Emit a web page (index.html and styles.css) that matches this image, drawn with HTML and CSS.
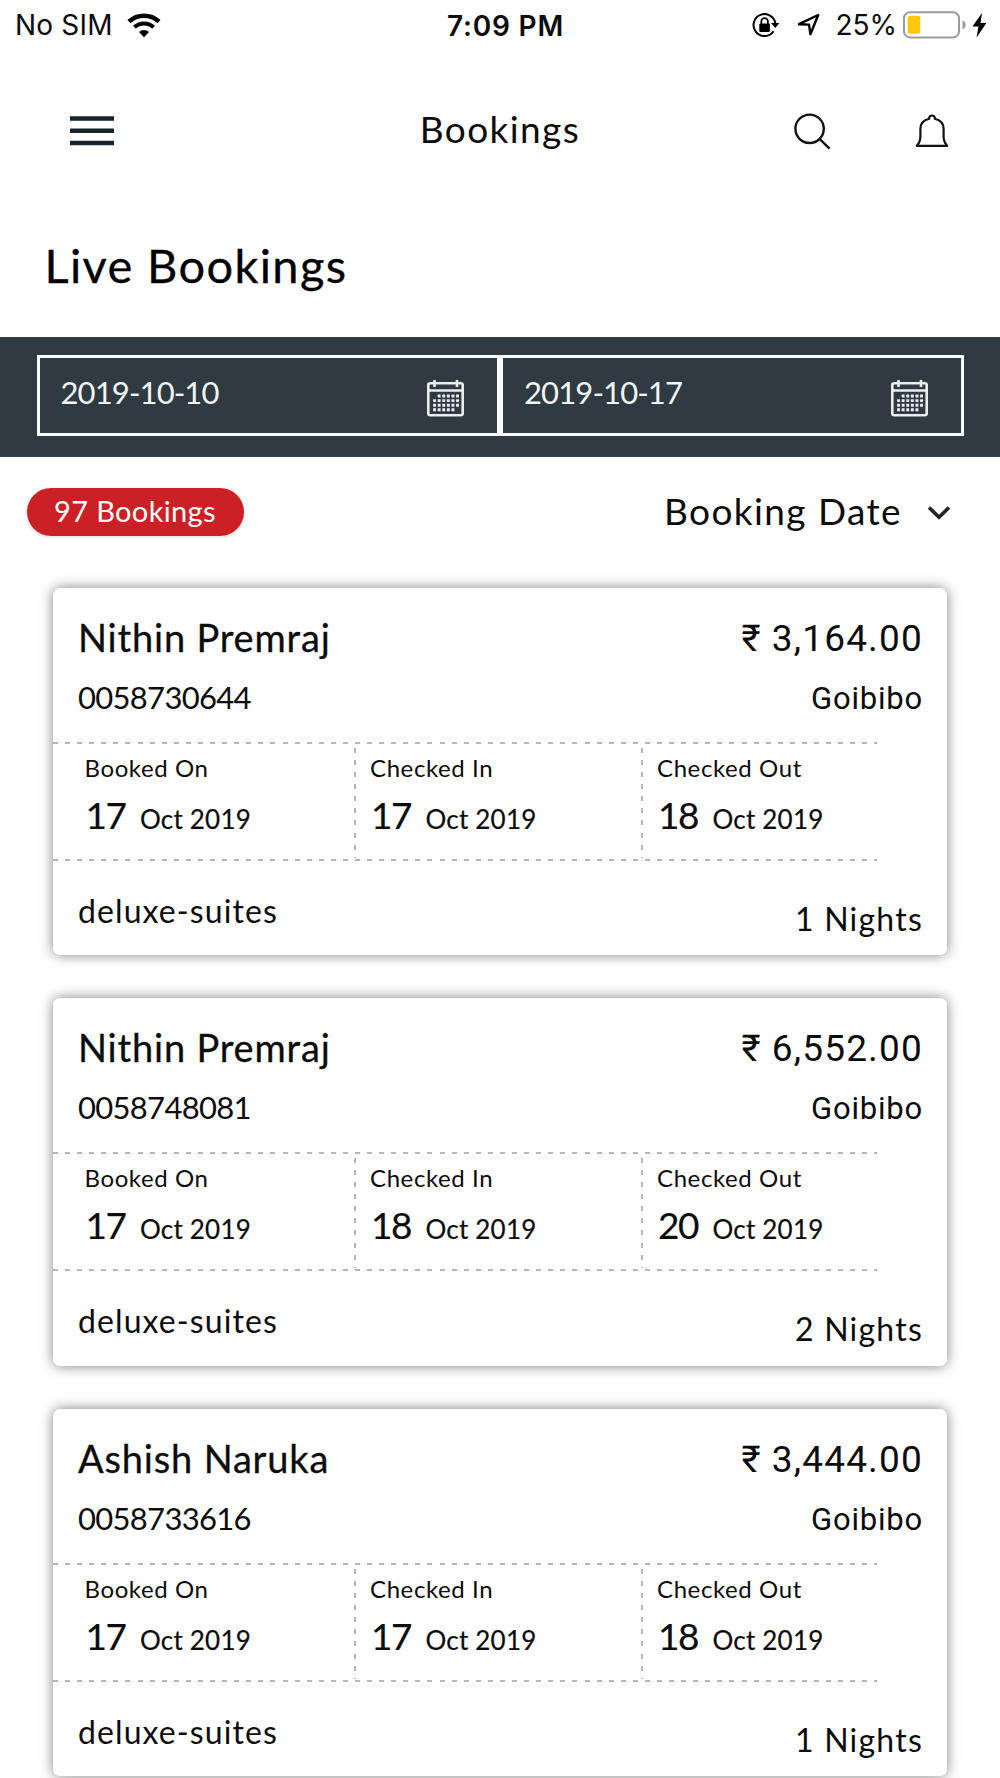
FILE: index.html
```html
<!DOCTYPE html>
<html lang="en">
<head>
<meta charset="utf-8">
<title>Bookings</title>
<link rel="stylesheet" href="styles.css">
</head>
<body>
<div class="status">
  <div class="status-left"><span class="carrier">No SIM</span>
    <svg class="wifi" width="34" height="25" viewBox="0 0 34 25"><g fill="none" stroke="#000"><path d="M2 8.6a22 22 0 0 1 30 0" stroke-width="4.4"/><path d="M7.4 14.3a14 14 0 0 1 19.2 0" stroke-width="4.2"/></g><path d="M17 24.3l-5-5.2a7.2 7.2 0 0 1 10 0z"/></svg>
  </div>
  <div class="clock">7:09 PM</div>
  <div class="status-right">
    <svg class="lock" width="28" height="26" viewBox="0 0 28 26"><path d="M21.6 19.3a11 11 0 1 1 1.9-7" fill="none" stroke="#000" stroke-width="2"/><path d="M19 11h8.4l-4.2 5z"/><rect x="7.3" y="11.5" width="10.6" height="8.5" rx="1"/><path d="M9.3 12V9.4a3.3 3.3 0 0 1 6.6 0V12" fill="none" stroke="#000" stroke-width="1.7"/></svg>
    <svg class="nav-arrow" width="24" height="24" viewBox="0 0 24 24"><path d="M2 11.2L21.2 2 13.4 21.2 12 11.6z" fill="none" stroke="#000" stroke-width="2.4" stroke-linejoin="round"/></svg>
    <span class="percent">25%</span>
    <svg class="battery" width="64" height="28" viewBox="0 0 64 28"><rect x="1" y="1.2" width="55" height="25.2" rx="6" fill="#fff" stroke="#9d9a9f" stroke-width="2"/><rect x="4.6" y="4.8" width="12.6" height="18" rx="2.5" fill="#fdc70c"/><path d="M59.5 9.3c4.2 1.5 4.2 7.5 0 9z" fill="#9d9a9f"/></svg>
    <svg class="bolt" width="15" height="25" viewBox="0 0 15 25"><path d="M10 0L.4 13.6h6L4.6 24.6 14.4 10H8.5z"/></svg>
  </div>
</div>

<header class="header">
  <svg class="menu" width="44" height="30" viewBox="0 0 44 30"><path d="M0 2.5h44M0 14.8h44M0 27h44" stroke="#18242b" stroke-width="4.6"/></svg>
  <h1 class="header-title">Bookings</h1>
  <div class="actions">
    <svg width="37" height="37" viewBox="0 0 37 37" fill="none" stroke="#111" stroke-width="2.4"><circle cx="15.6" cy="15.8" r="14.2"/><path d="M25.6 26l10 9.6"/></svg>
    <svg width="34" height="34" viewBox="0 0 34 34" fill="none" stroke="#111" stroke-width="2.2" stroke-linejoin="round"><path d="M14.2 4.8C13.6.4 20.4.4 19.8 4.8C25 6 28.6 9.8 28.6 15v7.4c0 4.4 1 6.6 3.6 9.4H1.8c2.6-2.8 3.6-5 3.6-9.4V15C5.4 9.8 9 6 14.2 4.8z"/></svg>
  </div>
</header>

<h2 class="page-title">Live Bookings</h2>

<div class="range">
  <div class="field"><span class="field-date">2019-10-10</span><svg class="cal" width="37" height="37" viewBox="0 0 37 37"><use href="#cal"/></svg></div>
  <div class="field"><span class="field-date">2019-10-17</span><svg class="cal" width="37" height="37" viewBox="0 0 37 37"><use href="#cal"/></svg></div>
</div>

<div class="summary">
  <span class="pill">97 Bookings</span>
  <div class="sort"><span>Booking Date</span><svg width="24" height="16" viewBox="0 0 24 16"><path d="M2 2.5l10 9.7 10-9.7" fill="none" stroke="#222" stroke-width="3.6"/></svg></div>
</div>

<main class="list">
  <article class="card">
    <div class="row"><span class="name">Nithin Premraj</span><span class="price"><span class="rupee">₹</span>3,164.00</span></div>
    <div class="row row-id"><span class="ref">0058730644</span><span class="source">Goibibo</span></div>
    <div class="dates">
      <div class="cell"><div class="label">Booked On</div><div class="date"><span class="day">17</span>Oct 2019</div></div>
      <div class="cell"><div class="label">Checked In</div><div class="date"><span class="day">17</span>Oct 2019</div></div>
      <div class="cell"><div class="label">Checked Out</div><div class="date"><span class="day">18</span>Oct 2019</div></div>
    </div>
    <div class="foot"><span class="room">deluxe-suites</span><span class="nights">1 Nights</span></div>
  </article>
  <article class="card">
    <div class="row"><span class="name">Nithin Premraj</span><span class="price"><span class="rupee">₹</span>6,552.00</span></div>
    <div class="row row-id"><span class="ref">0058748081</span><span class="source">Goibibo</span></div>
    <div class="dates">
      <div class="cell"><div class="label">Booked On</div><div class="date"><span class="day">17</span>Oct 2019</div></div>
      <div class="cell"><div class="label">Checked In</div><div class="date"><span class="day">18</span>Oct 2019</div></div>
      <div class="cell"><div class="label">Checked Out</div><div class="date"><span class="day">20</span>Oct 2019</div></div>
    </div>
    <div class="foot"><span class="room">deluxe-suites</span><span class="nights">2 Nights</span></div>
  </article>
  <article class="card">
    <div class="row"><span class="name">Ashish Naruka</span><span class="price"><span class="rupee">₹</span>3,444.00</span></div>
    <div class="row row-id"><span class="ref">0058733616</span><span class="source">Goibibo</span></div>
    <div class="dates">
      <div class="cell"><div class="label">Booked On</div><div class="date"><span class="day">17</span>Oct 2019</div></div>
      <div class="cell"><div class="label">Checked In</div><div class="date"><span class="day">17</span>Oct 2019</div></div>
      <div class="cell"><div class="label">Checked Out</div><div class="date"><span class="day">18</span>Oct 2019</div></div>
    </div>
    <div class="foot"><span class="room">deluxe-suites</span><span class="nights">1 Nights</span></div>
  </article>
</main>

<svg class="defs" width="0" height="0">
  <symbol id="cal" viewBox="0 0 37 37">
    <g fill="none" stroke="#e9eef0">
      <rect x="1.3" y="3.2" width="34.4" height="32" rx="2" stroke-width="2.6"/>
      <path d="M1 10.5h35" stroke-width="2.4"/>
      <path d="M7.5 0v7M30 0v7" stroke-width="2.6"/>
      <g stroke-width="2.9" stroke-dasharray="2.9 1.7">
        <path d="M10.7 16h21.3"/>
        <path d="M6.1 20.6h26"/>
        <path d="M6.1 25.2h26"/>
        <path d="M6.1 29.8h21.3"/>
      </g>
    </g>
  </symbol>
</svg>
</body>
</html>
```
FILE: styles.css
```css
* { box-sizing: border-box; }

body {
  margin: 0;
  width: 1000px;
  height: 1778px;
  overflow: hidden;
  background: #fff;
  color: #0c0c0c;
  font-family: Lato, "Open Sans", sans-serif;
}

svg { display: block; flex: none; }
.defs { position: absolute; }

/* Status bar */
.status {
  display: grid;
  grid-template-columns: 1fr auto 1fr;
  height: 50px;
  line-height: 52px;
  padding: 0 13px 0 15px;
  font-family: Inter, "Liberation Sans", sans-serif;
  font-size: 28px;
}
.status-left, .status-right { display: flex; align-items: center; height: 50px; }
.status-right { justify-content: flex-end; }
.carrier { letter-spacing: .2px; }
.wifi { margin-left: 14px; }
.clock { font-weight: 600; letter-spacing: .8px; padding-left: 9px; }
.lock { margin-right: 1px; }
.nav-arrow { margin-left: 16px; }
.percent { margin-left: 14px; }
.battery { margin-left: 6px; }
.bolt { margin-left: 5px; }

/* Header */
.header {
  display: grid;
  grid-template-columns: 1fr auto 1fr;
  align-items: center;
  height: 157px;
  padding: 0 51px 0 70px;
}
.menu { margin-top: 5px; }
.header-title {
  margin: 0;
  padding-right: 19px;
  font-size: 37px;
  font-weight: 400;
  line-height: 157px;
  letter-spacing: 1.4px;
}
.actions { display: flex; justify-content: flex-end; align-items: center; gap: 84px; padding-top: 5px; }

.page-title {
  margin: 0 0 14px;
  padding-left: 44.5px;
  font-size: 47px;
  font-weight: 400;
  line-height: 117px;
  height: 116px;
  letter-spacing: 1.35px;
  color: #000;
  -webkit-text-stroke: .3px #000;
}

/* Date range */
.range {
  display: flex;
  height: 120px;
  padding: 18px 36.5px 0;
  background: #2f3a42;
}
.field {
  display: flex;
  flex: 1;
  justify-content: space-between;
  height: 81px;
  padding: 0 33px 0 21px;
  border: 3px solid #f6f8f9;
  color: #f3f6f8;
}
.field-date { font-size: 31px; line-height: 69px; letter-spacing: -.88px; }
.cal { margin-top: 21.5px; }

/* Summary row */
.summary {
  display: flex;
  justify-content: space-between;
  align-items: flex-start;
  height: 130.5px;
  padding: 31px 49px 0 27px;
}
.pill {
  width: 217px;
  height: 48px;
  padding-left: 27px;
  border-radius: 24px;
  background: #cc2027;
  box-shadow: 0 1px 4px rgba(0, 0, 0, .15);
  color: #fff;
  font-size: 29px;
  line-height: 46px;
  letter-spacing: .36px;
}
.sort {
  display: flex;
  align-items: center;
  gap: 25px;
  font-size: 37px;
  line-height: 46px;
  letter-spacing: 1.4px;
}
.sort svg { margin-top: 3px; }

/* Booking cards */
.list {
  display: flex;
  flex-direction: column;
  gap: 43px;
  padding: 0 53px;
}
.card {
  height: 367.5px;
  flex: none;
  padding-top: 20px;
  border-radius: 7px;
  background: #fff;
  box-shadow: 0 0 13px rgba(0, 0, 0, .5);
}
.row, .foot {
  display: flex;
  justify-content: space-between;
  padding: 0 24px 0 25px;
}
.row { height: 58px; line-height: 58px; }
.row-id { height: 62px; line-height: 62px; }
.name { font-size: 38px; letter-spacing: .82px; -webkit-text-stroke: .3px #0c0c0c; }
.price { padding-top: 2px; font-family: Roboto, sans-serif; font-size: 37px; letter-spacing: 1.18px; }
.rupee { margin-right: 11px; letter-spacing: 0; }
.ref { font-size: 31px; letter-spacing: -.7px; }
.source { padding-top: 2px; font-family: Roboto, sans-serif; font-size: 31px; letter-spacing: .8px; }

.dates {
  display: grid;
  grid-template-columns: 301px 287px 236px;
  width: 824px;
  height: 119px;
  margin-top: 14px;
  background:
    repeating-linear-gradient(90deg, #b4b4b4 0 5px, transparent 5px 12.08px) 0 0 / 100% 2px no-repeat,
    repeating-linear-gradient(90deg, #b4b4b4 0 5px, transparent 5px 12.08px) 0 100% / 100% 2px no-repeat;
}
.cell { padding: 11px 0 0 16px; }
.cell:first-child { padding-left: 31.5px; }
.cell + .cell {
  background: repeating-linear-gradient(180deg, #b4b4b4 0 5px, transparent 5px 12.08px) 0 6px / 2px 110px no-repeat;
}
.label { font-size: 24px; line-height: 30px; letter-spacing: .6px; }
.date { padding-left: 1px; font-size: 26px; line-height: 64px; letter-spacing: .2px; white-space: nowrap; -webkit-text-stroke: .2px #0c0c0c; }
.day { display: inline-block; width: 54.5px; font-size: 37px; letter-spacing: -1.5px; }

.foot { line-height: 60px; font-size: 32px; }
.room { padding-top: 20px; letter-spacing: 1.09px; }
.nights { padding-top: 28px; letter-spacing: 1.23px; }
```
